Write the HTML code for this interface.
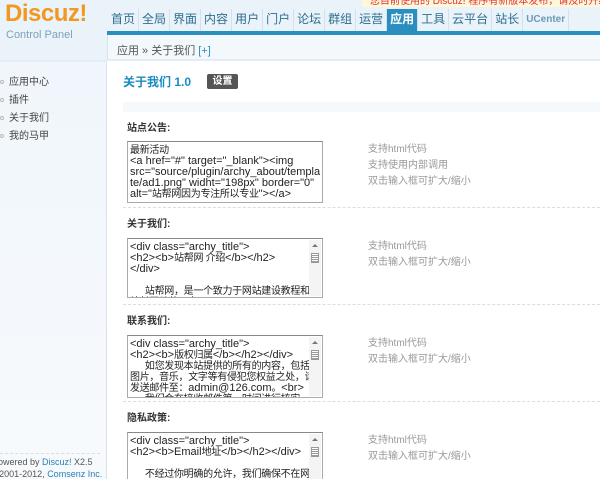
<!DOCTYPE html>
<html><head><meta charset="utf-8"><style>
*{margin:0;padding:0;box-sizing:border-box}
html,body{width:600px;height:479px;overflow:hidden}
body{background:#fff;font-family:"Liberation Sans","Noto Sans CJK SC",sans-serif;font-size:12px;color:#333;position:relative}
.abs{position:absolute}
#hd{left:0;top:0;width:600px;height:36px;background:#eaf3f9}
#hdl{left:0;top:36px;width:107px;height:26px;background:#eaf3f9;border-bottom:2px solid #e4edf3}
#side{left:0;top:62px;width:107px;height:417px;background:linear-gradient(#f0f6fb,#f7fafd);border-right:1px solid #d6e3ee}
.logo{left:5px;top:0px;font-size:24px;line-height:28px;font-weight:bold;color:#f19823;letter-spacing:-0.5px;z-index:2}
.cp{left:6px;top:29px;font-size:11px;line-height:13px;color:#7ea2b8;z-index:2}
.nav{left:108px;top:9px;height:22px;display:flex;font-size:12px;color:#2d6e8e;white-space:nowrap}
.nav span{padding:2px 3px 0;border-right:1px solid #d2e2ec;line-height:17px}
.nav span.on{background:#2a8fbf;color:#fff;font-weight:bold;height:24px}
.nav span.uc{font-weight:bold;font-size:10px;color:#6a9bb5;line-height:18px}
.bar{left:107px;top:31px;width:493px;height:4px;background:#2a8fbf}
.crumb{left:107px;top:35px;width:493px;height:26px;background:#f2f8fc;border-bottom:2px solid #e4edf3;border-left:1px solid #d6e3ee;padding:7px 9px;color:#555;font-size:11px}
.crumb b{font-weight:normal;color:#2a8fbf}
.notice{left:362px;top:-3px;width:238px;height:10px;background:#fff7d9;color:#d33;font-size:10px;padding-left:8px;line-height:9px;overflow:hidden;white-space:nowrap}
.sitem{left:0;font-size:10px;color:#444}
.sitem i{display:inline-block;width:4px;height:4px;border:1px solid #bbb;border-radius:50%;margin:0 5px 1px 0;vertical-align:middle}
.title{left:123px;top:73px;font-size:12px;font-weight:bold;color:#1a8ac0}
.btn{left:207px;top:74px;width:31px;height:15px;background:#555;color:#fff;font-size:10px;border-radius:2px;text-align:center;line-height:15px;font-weight:bold}
.band{left:123px;top:102px;width:477px;height:10px;background:#f5f9fc}
.lab{left:127px;font-size:10px;font-weight:bold;color:#333}
.ta{left:127px;width:196px;background:#fff;border:1px solid #aaa;border-top-color:#888;font-size:11px;line-height:11px;color:#222;padding:3px 2px 2px;overflow:hidden;white-space:pre}
.ta .c{font-size:10px;letter-spacing:-0.3px}
.ta.sc{padding-right:16px}
.sb{position:absolute;right:1px;top:1px;width:12px;bottom:1px;background:#f4f4f4}
.sb:before{content:"";position:absolute;left:3px;top:4px;border:3px solid transparent;border-bottom-color:#777;border-top:0}
.sb:after{content:"";position:absolute;left:2px;top:13px;width:6px;height:8px;border:1px solid #999;background:repeating-linear-gradient(#fff 0 1px,#999 1px 2px)}
.hint{left:368px;font-size:10px;color:#999;line-height:16px}
.dash{left:123px;width:477px;border-top:1px dashed #ddd}
.foot{left:0;font-size:9px;color:#555;white-space:nowrap}
.foot b{font-weight:normal;color:#2a7fb0}
</style></head><body>
<div id="hd" class="abs"></div>
<div id="hdl" class="abs"></div>
<div class="abs logo">Discuz!</div>
<div class="abs cp">Control Panel</div>
<div class="abs notice">您目前使用的 Discuz! 程序有新版本发布，请及时升级</div>
<div class="abs nav"><span>首页</span><span>全局</span><span>界面</span><span>内容</span><span>用户</span><span>门户</span><span>论坛</span><span>群组</span><span>运营</span><span class="on">应用</span><span>工具</span><span>云平台</span><span>站长</span><span class="uc">UCenter</span></div>
<div class="abs bar"></div>
<div class="abs crumb">应用 » 关于我们 <b>[+]</b></div>
<div id="side" class="abs"></div>
<div class="abs sitem" style="top:73px"><i></i>应用中心</div>
<div class="abs sitem" style="top:91px"><i></i>插件</div>
<div class="abs sitem" style="top:109px"><i></i>关于我们</div>
<div class="abs sitem" style="top:127px"><i></i>我的马甲</div>
<div class="abs dash" style="left:0;width:100px;top:453px"></div>
<div class="abs foot" style="top:457px;left:-8px">Powered by <b>Discuz!</b> X2.5</div>
<div class="abs foot" style="top:469px;left:-10px">© 2001-2012, <b>Comsenz Inc.</b></div>

<div class="abs title">关于我们 1.0</div>
<div class="abs btn">设置</div>
<div class="abs band"></div>

<div class="abs lab" style="top:119px">站点公告:</div>
<div class="abs ta" style="top:141px;height:62px"><span class="c">最新活动</span>
&lt;a href="#" target="_blank"&gt;&lt;img
src="source/plugin/archy_about/templa
te/ad1.png" widht="198px" border="0"
alt="<span class="c">站帮网因为专注所以专业</span>"&gt;&lt;/a&gt;</div>
<div class="abs hint" style="top:142px">支持html代码<br>支持使用内部调用<br>双击输入框可扩大/缩小</div>
<div class="abs dash" style="top:207px"></div>

<div class="abs lab" style="top:215px">关于我们:</div>
<div class="abs ta sc" style="top:238px;height:60px">&lt;div class="archy_title"&gt;
&lt;h2&gt;&lt;b&gt;<span class="c">站帮网 介绍</span>&lt;/b&gt;&lt;/h2&gt;
&lt;/div&gt;

<span class="c">      站帮网，是一个致力于网站建设教程和
站长互助的平台。</span><div class="sb"></div></div>
<div class="abs hint" style="top:239px">支持html代码<br>双击输入框可扩大/缩小</div>
<div class="abs dash" style="top:304px"></div>

<div class="abs lab" style="top:312px">联系我们:</div>
<div class="abs ta sc" style="top:335px;height:63px">&lt;div class="archy_title"&gt;
&lt;h2&gt;&lt;b&gt;<span class="c">版权归属</span>&lt;/b&gt;&lt;/h2&gt;&lt;/div&gt;
<span class="c">      如您发现本站提供的所有的内容，包括
图片，音乐，文字等有侵犯您权益之处，请
发送邮件至：</span>admin@126.com<span class="c">。</span>&lt;br&gt;
<span class="c">      我们会在接收邮件第一时间进行核实</span><div class="sb"></div></div>
<div class="abs hint" style="top:336px">支持html代码<br>双击输入框可扩大/缩小</div>
<div class="abs dash" style="top:401px"></div>

<div class="abs lab" style="top:409px">隐私政策:</div>
<div class="abs ta sc" style="top:432px;height:52px">&lt;div class="archy_title"&gt;
&lt;h2&gt;&lt;b&gt;Email<span class="c">地址</span>&lt;/b&gt;&lt;/h2&gt;&lt;/div&gt;

<span class="c">      不经过你明确的允许，我们确保不在网</span><div class="sb"></div></div>
<div class="abs hint" style="top:433px">支持html代码<br>双击输入框可扩大/缩小</div>
</body></html>
